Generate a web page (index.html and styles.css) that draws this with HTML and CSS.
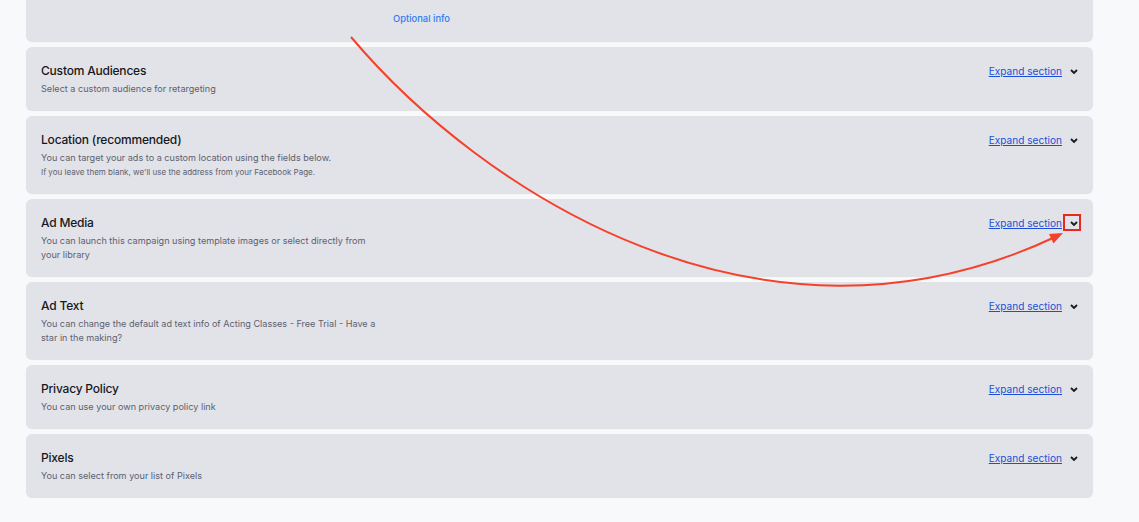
FILE: index.html
```html
<!DOCTYPE html>
<html>
<head>
  <title>Campaign settings</title>
  <link rel="stylesheet" href="styles.css">
</head>
<body>
  <div class="page">
    <div class="card card-top">
      <div class="top-row">
        <span class="spacer"></span>
        <a class="optional" href="#">Optional info</a>
      </div>
    </div>

    <div class="card">
      <div class="info">
        <h3>Custom Audiences</h3>
        <p>Select a custom audience for retargeting</p>
      </div>
      <div class="toggle">
        <a href="#">Expand section</a>
        <span class="chev"><svg width="8" height="6" viewBox="0 0 8 6"><polyline points="1,1 4,4 7,1" fill="none" stroke="#1a1c22" stroke-width="1.9"/></svg></span>
      </div>
    </div>

    <div class="card">
      <div class="info">
        <h3>Location (recommended)</h3>
        <p>You can target your ads to a custom location using the fields below.</p>
        <p class="small">If you leave them blank, we'll use the address from your Facebook Page.</p>
      </div>
      <div class="toggle">
        <a href="#">Expand section</a>
        <span class="chev"><svg width="8" height="6" viewBox="0 0 8 6"><polyline points="1,1 4,4 7,1" fill="none" stroke="#1a1c22" stroke-width="1.9"/></svg></span>
      </div>
    </div>

    <div class="card">
      <div class="info">
        <h3>Ad Media</h3>
        <p>You can launch this campaign using template images or select directly from your library</p>
      </div>
      <div class="toggle">
        <a href="#">Expand section</a>
        <span class="chev marked"><svg width="8" height="6" viewBox="0 0 8 6"><polyline points="1,1 4,4 7,1" fill="none" stroke="#1a1c22" stroke-width="1.9"/></svg></span>
      </div>
    </div>

    <div class="card">
      <div class="info">
        <h3>Ad Text</h3>
        <p>You can change the default ad text info of Acting Classes - Free Trial - Have a star in the making?</p>
      </div>
      <div class="toggle">
        <a href="#">Expand section</a>
        <span class="chev"><svg width="8" height="6" viewBox="0 0 8 6"><polyline points="1,1 4,4 7,1" fill="none" stroke="#1a1c22" stroke-width="1.9"/></svg></span>
      </div>
    </div>

    <div class="card">
      <div class="info">
        <h3>Privacy Policy</h3>
        <p>You can use your own privacy policy link</p>
      </div>
      <div class="toggle">
        <a href="#">Expand section</a>
        <span class="chev"><svg width="8" height="6" viewBox="0 0 8 6"><polyline points="1,1 4,4 7,1" fill="none" stroke="#1a1c22" stroke-width="1.9"/></svg></span>
      </div>
    </div>

    <div class="card">
      <div class="info">
        <h3>Pixels</h3>
        <p>You can select from your list of Pixels</p>
      </div>
      <div class="toggle">
        <a href="#">Expand section</a>
        <span class="chev"><svg width="8" height="6" viewBox="0 0 8 6"><polyline points="1,1 4,4 7,1" fill="none" stroke="#1a1c22" stroke-width="1.9"/></svg></span>
      </div>
    </div>
  </div>

  <!-- annotation drawn over the screenshot -->
  <svg class="annot" width="1139" height="522" viewBox="0 0 1139 522">
    <path d="M351 37 C 480 190, 760 375, 1054 237.5" fill="none" stroke="#f5412b" stroke-width="2"/>
    <polygon points="1063,233 1049,234 1053.5,243.5" fill="#f5412b"/>
  </svg>
</body>
</html>
```

FILE: styles.css
```css
body { margin: 0; background-color: #f8f9fb; font-family: Inter, "Noto Sans", sans-serif; color: #16181d; }
.page { width: 1067px; margin-left: 26px; display: flex; flex-direction: column; gap: 6px; padding-bottom: 25px; }
.card { background-color: #e2e3e8; border-radius: 6px; box-shadow: 0 1px 1px rgba(0,0,0,0.1); display: flex; justify-content: space-between; align-items: flex-start; padding: 16px 15px 14px 15px; }
.card-top { height: 41px; box-sizing: border-box; padding: 0 15px 5px 15px; border-top-left-radius: 0; border-top-right-radius: 0; align-items: center; }
.top-row { display: flex; align-items: center; }
.spacer { width: 352px; }
.optional { color: #2f7cf0; font-size: 9.4px; font-weight: 500; text-decoration: none; }
.info { width: 345px; }
.info h3 { margin: 0 0 4px 0; font-size: 12px; font-weight: 500; line-height: 15px; letter-spacing: -0.2px; }
.info p { margin: 0; font-size: 9.1px; line-height: 14px; color: #5d6170; }
.info p.small { font-size: 8px; line-height: 14px; }
.toggle { display: flex; align-items: center; gap: 8px; padding-top: 1px; }
.toggle a { color: #1b4fd8; font-size: 10.1px; text-decoration: underline; line-height: 15px; }
.chev { position: relative; width: 8px; height: 6px; display: flex; }
.chev.marked::after { content: ""; position: absolute; left: -7px; top: -7px; width: 14px; height: 13px; border: 2px solid #e8281c; }
.annot { position: absolute; left: 0; top: 0; pointer-events: none; }
```
